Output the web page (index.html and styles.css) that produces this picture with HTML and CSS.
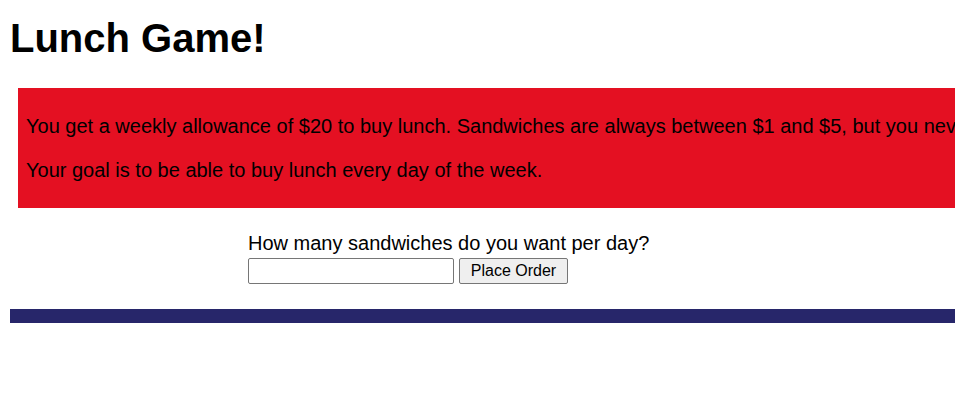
FILE: index.html
```html
<!DOCTYPE html>
<html>
<head>
<meta charset="utf-8">
<title>Lunch Game!</title>
<link rel="stylesheet" href="styles.css">
</head>
<body>
<h1 class="title">Lunch Game!</h1>
<div class="intro">
  <p>You get a weekly allowance of $20 to buy lunch. Sandwiches are always between $1 and $5, but you never know what the price will be each day.</p>
  <p>Your goal is to be able to buy lunch every day of the week.</p>
</div>
<form class="order">
  <label class="order-label" for="count">How many sandwiches do you want per day?</label>
  <div class="order-row">
    <input class="order-input" id="count" type="text">
    <button class="order-button" type="button">Place Order</button>
  </div>
</form>
<div class="footer-bar"></div>
</body>
</html>
```
FILE: styles.css
```css
html {
  overflow: hidden;
}
body {
  margin: 0 0 0 10px;
  font-family: "Liberation Sans", Arial, sans-serif;
  color: #000;
  background: #fff;
}
.title {
  margin: 15px 0 27px 0;
  font-size: 40px;
  font-weight: bold;
  line-height: 46px;
}
.intro {
  margin-left: 8px;
  padding: 6px 8px;
  background: #e41022;
  white-space: nowrap;
  font-size: 20px;
  line-height: 24px;
}
.intro p {
  margin: 20px 0;
}
.order {
  margin: 24px 0 0 238px;
}
.order-label {
  display: block;
  font-size: 20px;
  line-height: 23px;
}
.order-row {
  display: flex;
  gap: 5px;
  margin-top: 3px;
}
.order-input {
  box-sizing: border-box;
  width: 206px;
  height: 26px;
  border: 1px solid #767676;
  border-radius: 2px;
  padding: 1px 3px;
  font-family: "Liberation Sans", Arial, sans-serif;
  font-size: 16px;
}
.order-button {
  box-sizing: border-box;
  width: 109px;
  height: 26px;
  padding: 0 6px;
  border: 1px solid #767676;
  border-radius: 2px;
  background: #efefef;
  color: #000;
  font-family: "Liberation Sans", Arial, sans-serif;
  font-size: 16px;
}
.footer-bar {
  margin-top: 25px;
  height: 14px;
  background: #27266a;
}
```
